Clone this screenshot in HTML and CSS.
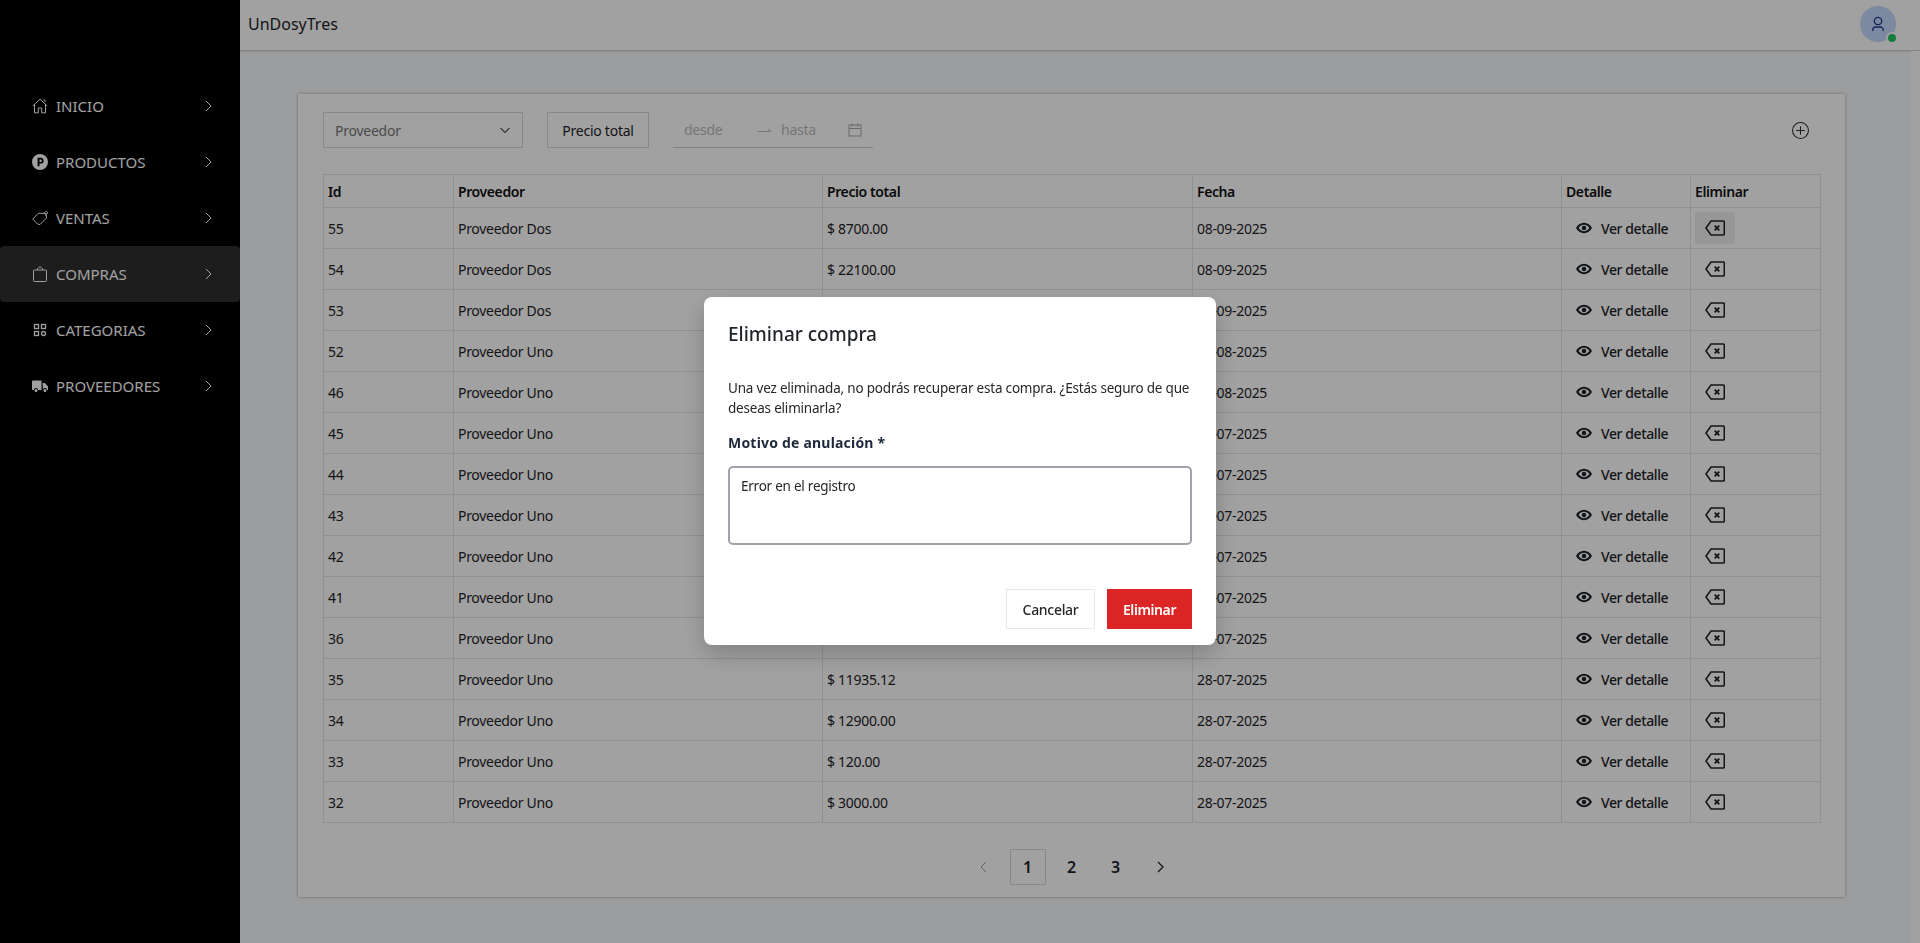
FILE: index.html
```html
<!DOCTYPE html>
<html lang="es">
<head>
  <meta charset="UTF-8" />
  <title>UnDosyTres</title>
  <meta name="viewport" content="width=device-width, initial-scale=1" />
  <link rel="stylesheet" href="styles.css">
</head>
<body>
  <div class="app">
    <aside class="sidebar">
      <nav class="menu">
        <a class="menu-item">
          <svg class="menu-icon" viewBox="0 0 16 16" fill="none" stroke="currentColor" stroke-width="1"><path d="M.8 8 8 1.200 15.200 8M2.500 6.600v8.200h3.800V10h3.400v4.800h3.800V6.600M11.500 2.200h1.500v2"/></svg>
          <span class="menu-label">INICIO</span>
          <svg class="menu-chevron" viewBox="0 0 12 12" fill="none" stroke="currentColor"><path d="m4 1 5 5-5 5"/></svg>
        </a>
        <a class="menu-item">
          <svg class="menu-icon" viewBox="0 0 16 16"><path fill="currentColor" fill-rule="evenodd" d="M8 0a8 8 0 1 1 0 16A8 8 0 0 1 8 0ZM5.600 3.800v8.400h1.900V9.600h1.200a2.900 2.900 0 0 0 0-5.800Zm1.900 1.600h1.100a1.300 1.300 0 0 1 0 2.600H7.500Z"/></svg>
          <span class="menu-label">PRODUCTOS</span>
          <svg class="menu-chevron" viewBox="0 0 12 12" fill="none" stroke="currentColor"><path d="m4 1 5 5-5 5"/></svg>
        </a>
        <a class="menu-item">
          <svg class="menu-icon" viewBox="0 0 16 16" fill="none" stroke="currentColor"><path d="M.7 9 6.500 3.200l7.500.3.500 4.500L8 14.500 5.500 14Z"/><path d="M11.500 3.300c1-1.600 3-2.200 3.800-1.200.5 1-.3 2.500-2.300 3.300"/></svg>
          <span class="menu-label">VENTAS</span>
          <svg class="menu-chevron" viewBox="0 0 12 12" fill="none" stroke="currentColor"><path d="m4 1 5 5-5 5"/></svg>
        </a>
        <a class="menu-item active">
          <svg class="menu-icon" viewBox="0 0 16 16" fill="none" stroke="currentColor"><rect x="1.500" y="4" width="13" height="11.500" rx="1"/><path d="M5.500 4c0-4 5-4 5 0"/></svg>
          <span class="menu-label">COMPRAS</span>
          <svg class="menu-chevron" viewBox="0 0 12 12" fill="none" stroke="currentColor"><path d="m4 1 5 5-5 5"/></svg>
        </a>
        <a class="menu-item">
          <svg class="menu-icon" viewBox="0 0 16 16" fill="none" stroke="currentColor" stroke-width="1.300"><rect x="2.500" y="2.500" width="4" height="4"/><rect x="9.500" y="2.500" width="4" height="4"/><rect x="2.500" y="9.500" width="4" height="4"/><circle cx="11.500" cy="11.500" r="2"/></svg>
          <span class="menu-label">CATEGORIAS</span>
          <svg class="menu-chevron" viewBox="0 0 12 12" fill="none" stroke="currentColor"><path d="m4 1 5 5-5 5"/></svg>
        </a>
        <a class="menu-item">
          <svg class="menu-icon" viewBox="0 0 16 16"><path fill="currentColor" d="M0 3.500a1 1 0 0 1 1-1h8.500v9.500H6a2 2 0 0 0-4 0H1a1 1 0 0 1-1-1Zm10.500 1.500h2.300l3.200 3.400V12h-1a2 2 0 0 0-4-.2ZM4 11a1.500 1.500 0 1 1 0 3 1.500 1.500 0 0 1 0-3Zm9 0a1.500 1.500 0 1 1 0 3 1.500 1.500 0 0 1 0-3Z"/></svg>
          <span class="menu-label">PROVEEDORES</span>
          <svg class="menu-chevron" viewBox="0 0 12 12" fill="none" stroke="currentColor"><path d="m4 1 5 5-5 5"/></svg>
        </a>
      </nav>
    </aside>

    <div class="content">
      <header class="topbar">
        <span class="brand">UnDosyTres</span>
        <div class="avatar">
          <svg viewBox="0 0 16 16" fill="none" stroke="currentColor" stroke-width="1.300"><circle cx="8" cy="5" r="3.700"/><path d="M2.800 15v-1a3 3 0 0 1 3-3h4.400a3 3 0 0 1 3 3v1"/></svg>
          <span class="status-dot"></span>
        </div>
      </header>

      <main class="main">
        <section class="card">
          <div class="filters">
            <div class="select">
              <span>Proveedor</span>
              <svg viewBox="0 0 12 12" fill="none" stroke="currentColor" stroke-width="1.200"><path d="m1.500 4 4.500 4.500L10.500 4"/></svg>
            </div>
            <button class="btn-filter" type="button">Precio total</button>
            <div class="range">
              <span class="range-from">desde</span>
              <svg class="range-arrow" viewBox="0 0 16 16" fill="none" stroke="currentColor"><path d="M1 9.500h13l-3-2.500"/></svg>
              <span class="range-to">hasta</span>
              <svg class="range-cal" viewBox="0 0 14 14" fill="none" stroke="currentColor"><rect x="1" y="2" width="12" height="11"/><path d="M1 5.500h12M4 .5v3M10 .5v3"/></svg>
            </div>
            <svg class="add-icon" viewBox="0 0 16 16" fill="none" stroke="currentColor"><circle cx="8" cy="8" r="7.500"/><path d="M8 4v8M4 8h8"/></svg>
          </div>

          <table class="grid">
            <colgroup>
              <col class="col-id"><col class="col-prov"><col class="col-price"><col class="col-date"><col class="col-detail"><col class="col-del">
            </colgroup>
            <thead>
              <tr><th>Id</th><th>Proveedor</th><th>Precio total</th><th>Fecha</th><th>Detalle</th><th>Eliminar</th></tr>
            </thead>
            <tbody id="rows"></tbody>
          </table>

          <div class="pager">
            <span class="page-arrow muted"><svg viewBox="0 0 12 12" fill="none" stroke="currentColor"><path d="M8 1 3 6l5 5"/></svg></span>
            <span class="page current">1</span>
            <span class="page">2</span>
            <span class="page">3</span>
            <span class="page-arrow"><svg viewBox="0 0 12 12" fill="none" stroke="currentColor" stroke-width="1.300"><path d="m4 1 5 5-5 5"/></svg></span>
          </div>
        </section>
      </main>
    </div>
  </div>

  <div class="overlay">
    <div class="modal">
      <h2 class="modal-title">Eliminar compra</h2>
      <p class="modal-text">Una vez eliminada, no podrás recuperar esta compra. ¿Estás seguro de que deseas eliminarla?</p>
      <label class="modal-label" for="motivo">Motivo de anulación *</label>
      <textarea id="motivo" class="modal-input">Error en el registro</textarea>
      <div class="modal-actions">
        <button class="btn-cancel" type="button">Cancelar</button>
        <button class="btn-delete" type="button">Eliminar</button>
      </div>
    </div>
  </div>

  <script>
    // prices left empty sit behind the modal
    const compras = [
      [55, "Proveedor Dos", "$ 8700.00", "08-09-2025"],
      [54, "Proveedor Dos", "$ 22100.00", "08-09-2025"],
      [53, "Proveedor Dos", "", "08-09-2025"],
      [52, "Proveedor Uno", "", "18-08-2025"],
      [46, "Proveedor Uno", "", "18-08-2025"],
      [45, "Proveedor Uno", "", "28-07-2025"],
      [44, "Proveedor Uno", "", "28-07-2025"],
      [43, "Proveedor Uno", "", "28-07-2025"],
      [42, "Proveedor Uno", "", "28-07-2025"],
      [41, "Proveedor Uno", "", "28-07-2025"],
      [36, "Proveedor Uno", "", "28-07-2025"],
      [35, "Proveedor Uno", "$ 11935.12", "28-07-2025"],
      [34, "Proveedor Uno", "$ 12900.00", "28-07-2025"],
      [33, "Proveedor Uno", "$ 120.00", "28-07-2025"],
      [32, "Proveedor Uno", "$ 3000.00", "28-07-2025"]
    ];

    const eye = '<svg class="eye" viewBox="0 0 16 16"><path fill="currentColor" fill-rule="evenodd" d="M8 2.800c3.500 0 6.400 2.200 8 5.200-1.600 3-4.500 5.200-8 5.200S1.600 11 0 8c1.600-3 4.500-5.200 8-5.200ZM8 4.800C5.800 4.800 4 6 2.600 8 4 10 5.800 11.200 8 11.200s4-1.200 5.400-3.200C12 6 10.200 4.800 8 4.800Zm0 .9a2.300 2.300 0 1 1 0 4.600 2.300 2.300 0 0 1 0-4.600Z"/></svg>';
    const erase = '<svg class="erase" viewBox="0 0 20 16" fill="none" stroke="currentColor" stroke-width="1.600"><path d="M6 1h12.500a.8.8 0 0 1 .8.8v12.400a.8.8 0 0 1-.8.8H6L1 8Z"/><path stroke-width="1.800" d="m9.700 5.700 4.600 4.600M14.300 5.700l-4.600 4.600"/></svg>';

    document.getElementById("rows").innerHTML = compras.map((c, i) => `
      <tr>
        <td>${c[0]}</td><td>${c[1]}</td><td>${c[2]}</td><td>${c[3]}</td>
        <td><span class="detail-link">${eye}Ver detalle</span></td>
        <td><span class="erase-btn${i === 0 ? " hovered" : ""}">${erase}</span></td>
      </tr>`).join("");
  </script>
</body>
</html>
```

FILE: styles.css
```css
* {
  box-sizing: border-box;
}
html, body {
  margin: 0;
  height: 100%;
  overflow: hidden;
}
body {
  font-family: "Noto Sans", "Open Sans", sans-serif;
  font-size: 14px;
  color: #1f2328;
  background: #f8f9fb;
}
.app {
  display: flex;
  height: 943px;
}

/* sidebar */
.sidebar {
  width: 240px;
  flex: none;
  background: #000;
  padding-top: 78px;
}
.menu-item {
  display: flex;
  align-items: center;
  height: 56px;
  padding: 0 26px 0 32px;
  color: #fff;
  font-size: 15px;
  border-radius: 4px;
}
.menu-item.active {
  background: #2e2e2e;
}
.menu-icon {
  width: 16px;
  height: 16px;
  margin-right: 8px;
  flex: none;
}
.menu-label {
  flex: 1;
}
.menu-chevron {
  width: 12px;
  height: 12px;
}

/* top bar */
.content {
  flex: 1;
  display: flex;
  flex-direction: column;
  min-width: 0;
}
.topbar {
  height: 51px;
  flex: none;
  display: flex;
  align-items: center;
  justify-content: space-between;
  padding: 0 24px 2px 8px;
  background: #fff;
  border-bottom: 1px solid #d0d0d0;
  box-shadow: 0 1px 2px rgba(0, 0, 0, .1);
}
.brand {
  font-size: 16px;
}
.avatar {
  position: relative;
  width: 36px;
  height: 36px;
  border-radius: 50%;
  background: #c6daff;
  color: #1e3a8a;
  display: flex;
  align-items: center;
  justify-content: center;
}
.avatar svg {
  width: 16px;
  height: 16px;
}
.status-dot {
  position: absolute;
  right: -2px;
  bottom: -2px;
  width: 12px;
  height: 12px;
  border: 2px solid #fff;
  border-radius: 50%;
  background: #22c55e;
}

/* card */
.main {
  flex: 1;
  padding: 43px 66px 46px 58px;
  border-right: 9px solid #fff;
}
.card {
  background: #fff;
  height: 803px;
  padding: 18px 25px 0;
  box-shadow: 0 0 3px rgba(0, 0, 0, .35);
}
.filters {
  display: flex;
  align-items: center;
  height: 36px;
  margin-bottom: 26px;
  letter-spacing: -.25px;
}
.select {
  width: 200px;
  height: 36px;
  display: flex;
  align-items: center;
  justify-content: space-between;
  padding: 0 11px;
  border: 1px solid #d9d9d9;
  color: #777;
  margin-right: 24px;
}
.select svg {
  width: 12px;
  height: 12px;
  color: #555;
}
.btn-filter {
  width: 102px;
  height: 36px;
  font: inherit;
  letter-spacing: inherit;
  color: #1f2328;
  background: #fff;
  border: 1px solid #d9d9d9;
  margin-right: 24px;
}
.range {
  width: 200px;
  height: 36px;
  display: flex;
  align-items: center;
  padding: 0 11px;
  border-bottom: 1px solid #d0d0d0;
  color: #bcbcbc;
}
.range-from {
  width: 73px;
}
.range-arrow {
  width: 16px;
  height: 16px;
  margin-right: 8px;
}
.range-to {
  width: 67px;
}
.range-cal {
  width: 14px;
  height: 14px;
  color: #a8a8a8;
}
.add-icon {
  width: 17px;
  height: 17px;
  margin-left: auto;
  margin-right: 11px;
  color: #333;
}

/* table */
.grid {
  width: 1497px;
  border-collapse: collapse;
  table-layout: fixed;
  font-size: 14px;
  letter-spacing: -.3px;
}
.col-id { width: 130px; }
.col-prov { width: 369px; }
.col-price { width: 370px; }
.col-date { width: 369px; }
.col-detail { width: 129px; }
.col-del { width: 130px; }
.grid th, .grid td {
  border: 1px solid #e6e6e6;
  padding: 0 4px;
  text-align: left;
}
.grid th {
  height: 33px;
  font-weight: 600;
  color: #111;
  letter-spacing: -.4px;
}
.grid td {
  height: 41px;
}
.detail-link {
  display: flex;
  align-items: center;
  padding-left: 10px;
  font-weight: 500;
  letter-spacing: -.4px;
}
.eye {
  width: 16px;
  height: 16px;
  margin-right: 9px;
}
.erase-btn {
  display: flex;
  align-items: center;
  justify-content: center;
  width: 40px;
  height: 32px;
}
.erase-btn.hovered {
  background: #f0f0f0;
}
.erase {
  width: 20px;
  height: 16px;
}

/* pagination */
.pager {
  display: flex;
  justify-content: center;
  gap: 8px;
  margin-top: 26px;
}
.page, .page-arrow {
  width: 36px;
  height: 36px;
  display: flex;
  align-items: center;
  justify-content: center;
  font-size: 16px;
  font-weight: 600;
}
.page.current {
  border: 1px solid #d9d9d9;
}
.page-arrow svg {
  width: 12px;
  height: 12px;
}
.page-arrow.muted {
  color: #999;
}

/* modal */
.overlay {
  position: fixed;
  inset: 0;
  padding-bottom: 1px;
  background: rgba(0, 0, 0, .37);
  display: flex;
  align-items: center;
  justify-content: center;
}
.modal {
  width: 512px;
  height: 348px;
  padding: 23px 24px 24px;
  background: #fff;
  border-radius: 8px;
  box-shadow: 0 10px 25px rgba(0, 0, 0, .2);
  display: flex;
  flex-direction: column;
}
.modal-title {
  margin: 0;
  font-size: 19px;
  line-height: 28px;
  font-weight: 500;
  color: #1f2328;
}
.modal-text {
  margin: 30px 0 0;
  font-size: 13.5px;
  line-height: 20px;
  letter-spacing: -.2px;
  color: #27272a;
}
.modal-label {
  display: block;
  margin-top: 15px;
  line-height: 20px;
  font-weight: 700;
  color: #1e293b;
  letter-spacing: .2px;
}
.modal-input {
  display: block;
  width: 100%;
  height: 79px;
  margin-top: 13px;
  padding: 9px 11px 8px;
  font: inherit;
  font-size: 13.5px;
  letter-spacing: -.24px;
  color: #27272a;
  border: 2px solid #a1a1aa;
  border-radius: 5px;
  outline: none;
  resize: none;
}
.modal-actions {
  display: flex;
  justify-content: flex-end;
  gap: 12px;
  margin-top: auto;
  margin-bottom: -8px;
}
.btn-cancel, .btn-delete {
  height: 40px;
  font: inherit;
  font-weight: 500;
  letter-spacing: -.3px;
  border-radius: 0;
}
.btn-cancel {
  width: 89px;
  color: #27272a;
  background: #fff;
  border: 1px solid #e5e7eb;
}
.btn-delete {
  width: 85px;
  color: #fff;
  background: #dc2626;
  border: none;
  font-weight: 600;
  letter-spacing: -.4px;
}
```
